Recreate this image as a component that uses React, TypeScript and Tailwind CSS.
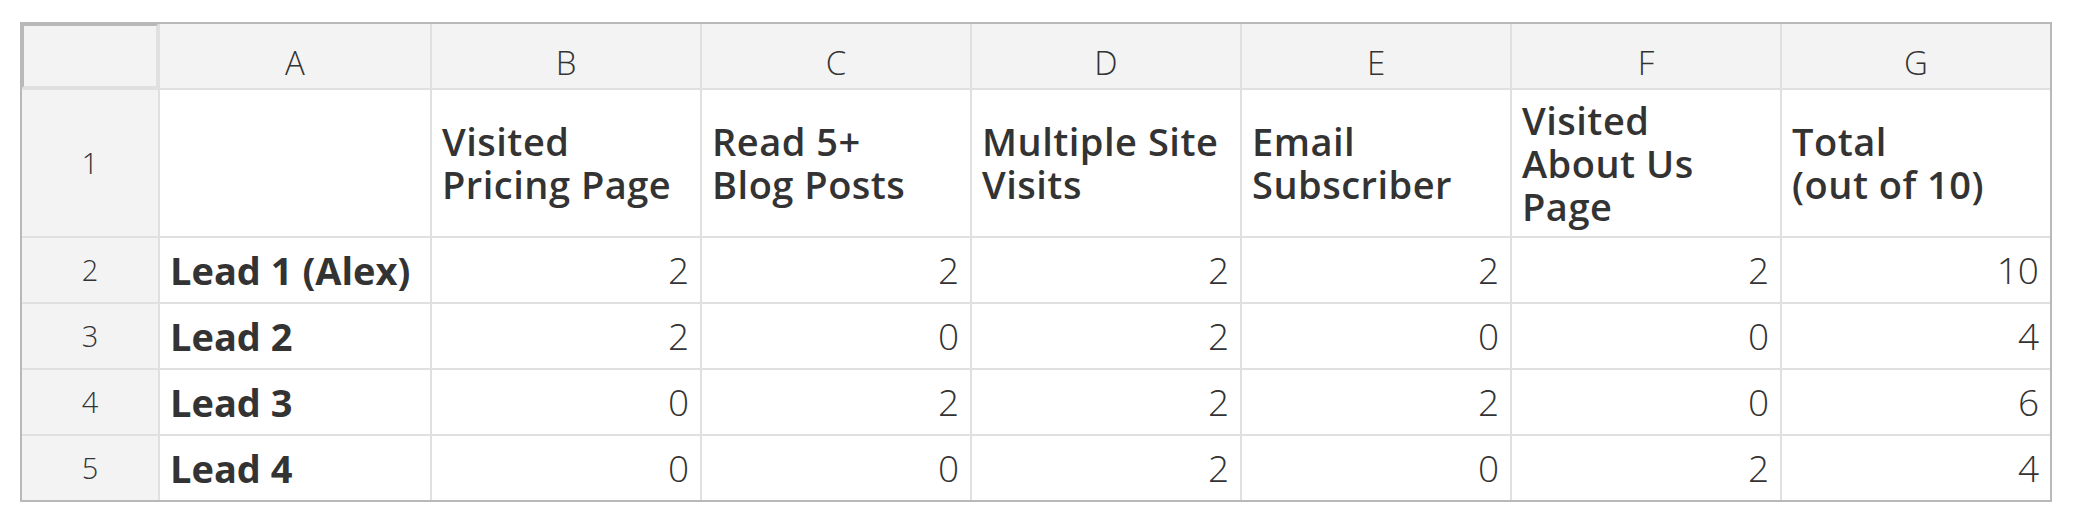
const columns = ['A', 'B', 'C', 'D', 'E', 'F', 'G'];

const headers = [
	'',
	'Visited\nPricing Page',
	'Read 5+\nBlog Posts',
	'Multiple Site\nVisits',
	'Email\nSubscriber',
	'Visited\nAbout Us\nPage',
	'Total\n(out of 10)',
];

const leads = [
	{ name: 'Lead 1 (Alex)', scores: [2, 2, 2, 2, 2, 10] },
	{ name: 'Lead 2', scores: [2, 0, 2, 0, 0, 4] },
	{ name: 'Lead 3', scores: [0, 2, 2, 2, 0, 6] },
	{ name: 'Lead 4', scores: [0, 0, 2, 0, 2, 4] },
];

function RowNumber({ n }: { n: number }) {
	return (
		<div className="flex items-center justify-center bg-[#f3f3f3] text-[29px] font-light text-[#333]">
			{n}
		</div>
	);
}

export default function App() {
	return (
		<div className="min-h-screen bg-white pl-[20px] pt-[22px] font-['Open_Sans',sans-serif]">
			<div className="w-fit border-2 border-[#b9b9b9]">
				<div className="grid grid-cols-[136px_270px_repeat(6,268px)] grid-rows-[64px_146px_repeat(4,64px)] gap-[2px] bg-[#e0e0e0]">
					{/* Column letters */}
					<div className="border-l-2 border-t-2 border-r-2 border-b-2 border-l-[#b9b9b9] border-t-[#b9b9b9] border-r-[#e0e0e0] border-b-[#e0e0e0] bg-[#f3f3f3]" />
					{columns.map((c) => (
						<div
							key={c}
							className="flex items-center justify-center bg-[#f3f3f3] pt-[14px] text-[33px] font-light text-[#333]"
						>
							{c}
						</div>
					))}

					{/* Row 1: criteria */}
					<RowNumber n={1} />
					{headers.map((h, i) => (
						<div
							key={i}
							className="flex items-center whitespace-pre-line bg-white pl-[10px] text-[38px] leading-[43px] font-semibold tracking-[0.5px] text-[#333]"
						>
							{h}
						</div>
					))}

					{/* Lead rows */}
					{leads.map((lead, r) => (
						<>
							<RowNumber key={`n${r}`} n={r + 2} />
							<div
								key={`l${r}`}
								className="flex items-center bg-white pl-[10px] text-[38px] font-bold text-[#333]"
							>
								{lead.name}
							</div>
							{lead.scores.map((s, i) => (
								<div
									key={`s${r}-${i}`}
									className="flex items-center justify-end bg-white pr-[11px] text-[37px] font-light text-[#333]"
								>
									{s}
								</div>
							))}
						</>
					))}
				</div>
			</div>
		</div>
	);
}
